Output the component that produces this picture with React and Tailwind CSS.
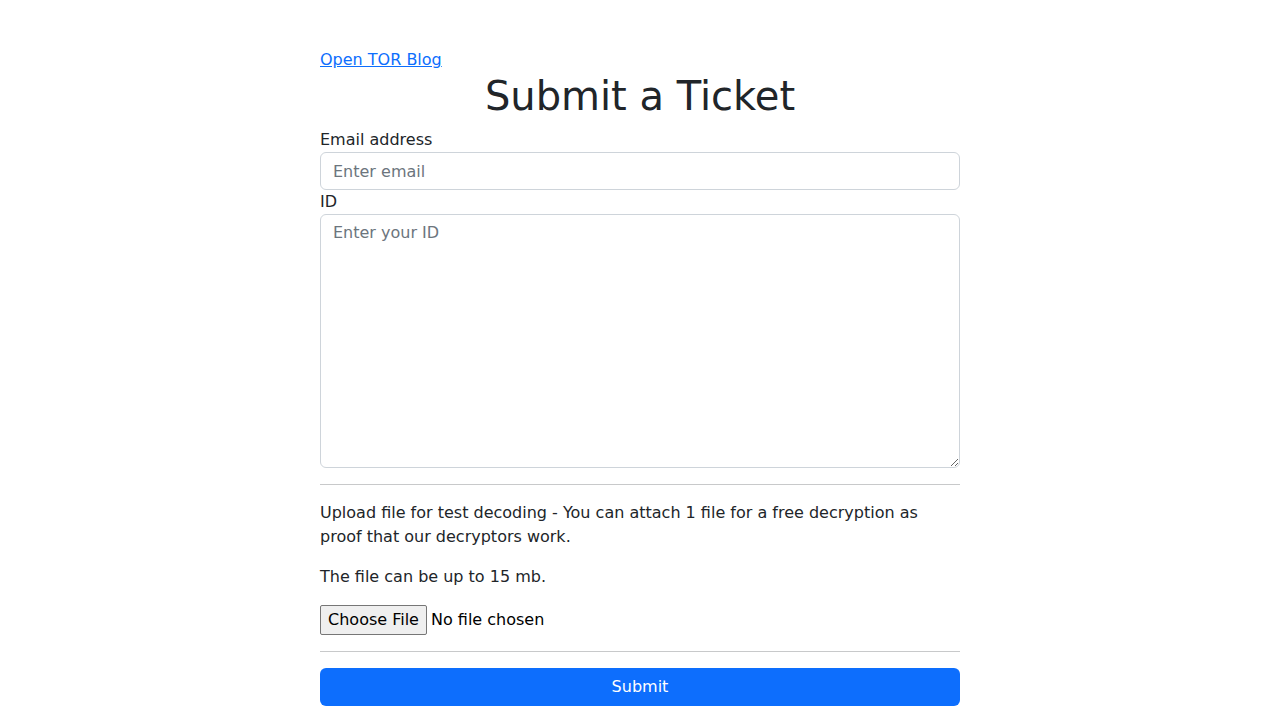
export default function App() {
  return (
    <div className="min-h-screen bg-white font-['DejaVu_Sans',sans-serif] text-[16px] leading-[24px] text-[#212529]">
      <div className="mx-auto w-[640px] pt-[48px]">
        <a href="#" className="text-[#0d6efd] underline">Open TOR Blog</a>
        <h1 className="mb-[8px] text-center text-[40px] font-normal leading-[48px]">Submit a Ticket</h1>
        <form onSubmit={(e) => e.preventDefault()}>
          <label className="block">Email address</label>
          <input
            type="email"
            placeholder="Enter email"
            className="block h-[38px] w-full rounded-[6px] border border-[#ced4da] px-[12px] py-[6px] text-[16px] leading-[24px] text-[#212529] outline-none placeholder:text-[#6c757d]"
          />
          <label className="block">ID</label>
          <textarea
            rows={10}
            placeholder="Enter your ID"
            className="block h-[254px] w-full rounded-[6px] border border-[#ced4da] px-[12px] py-[6px] text-[16px] leading-[24px] text-[#212529] outline-none placeholder:text-[#6c757d]"
          />
          <hr className="my-[16px] border-0 border-t border-[#c8c9ca]" />
          <p className="mb-[16px]">
            Upload file for test decoding - You can attach 1 file for a free decryption as proof that our decryptors work.
          </p>
          <p className="mb-[16px]">The file can be up to 15 mb.</p>
          <div className="flex h-[30px] items-start">
            <label className="flex h-[30px] items-center">
              <span className="flex h-[30px] w-[107px] items-center justify-center rounded-[2px] border border-[#767676] bg-[#efefef] text-[16px] text-black">Choose File</span>
              <span className="ml-[4px] text-black">No file chosen</span>
              <input type="file" className="hidden" />
            </label>
          </div>
          <hr className="my-[16px] border-0 border-t border-[#c8c9ca]" />
          <button
            type="submit"
            className="block h-[38px] w-full rounded-[6px] bg-[#0d6efd] text-[16px] text-white"
          >
            Submit
          </button>
        </form>
      </div>
    </div>
  );
}
